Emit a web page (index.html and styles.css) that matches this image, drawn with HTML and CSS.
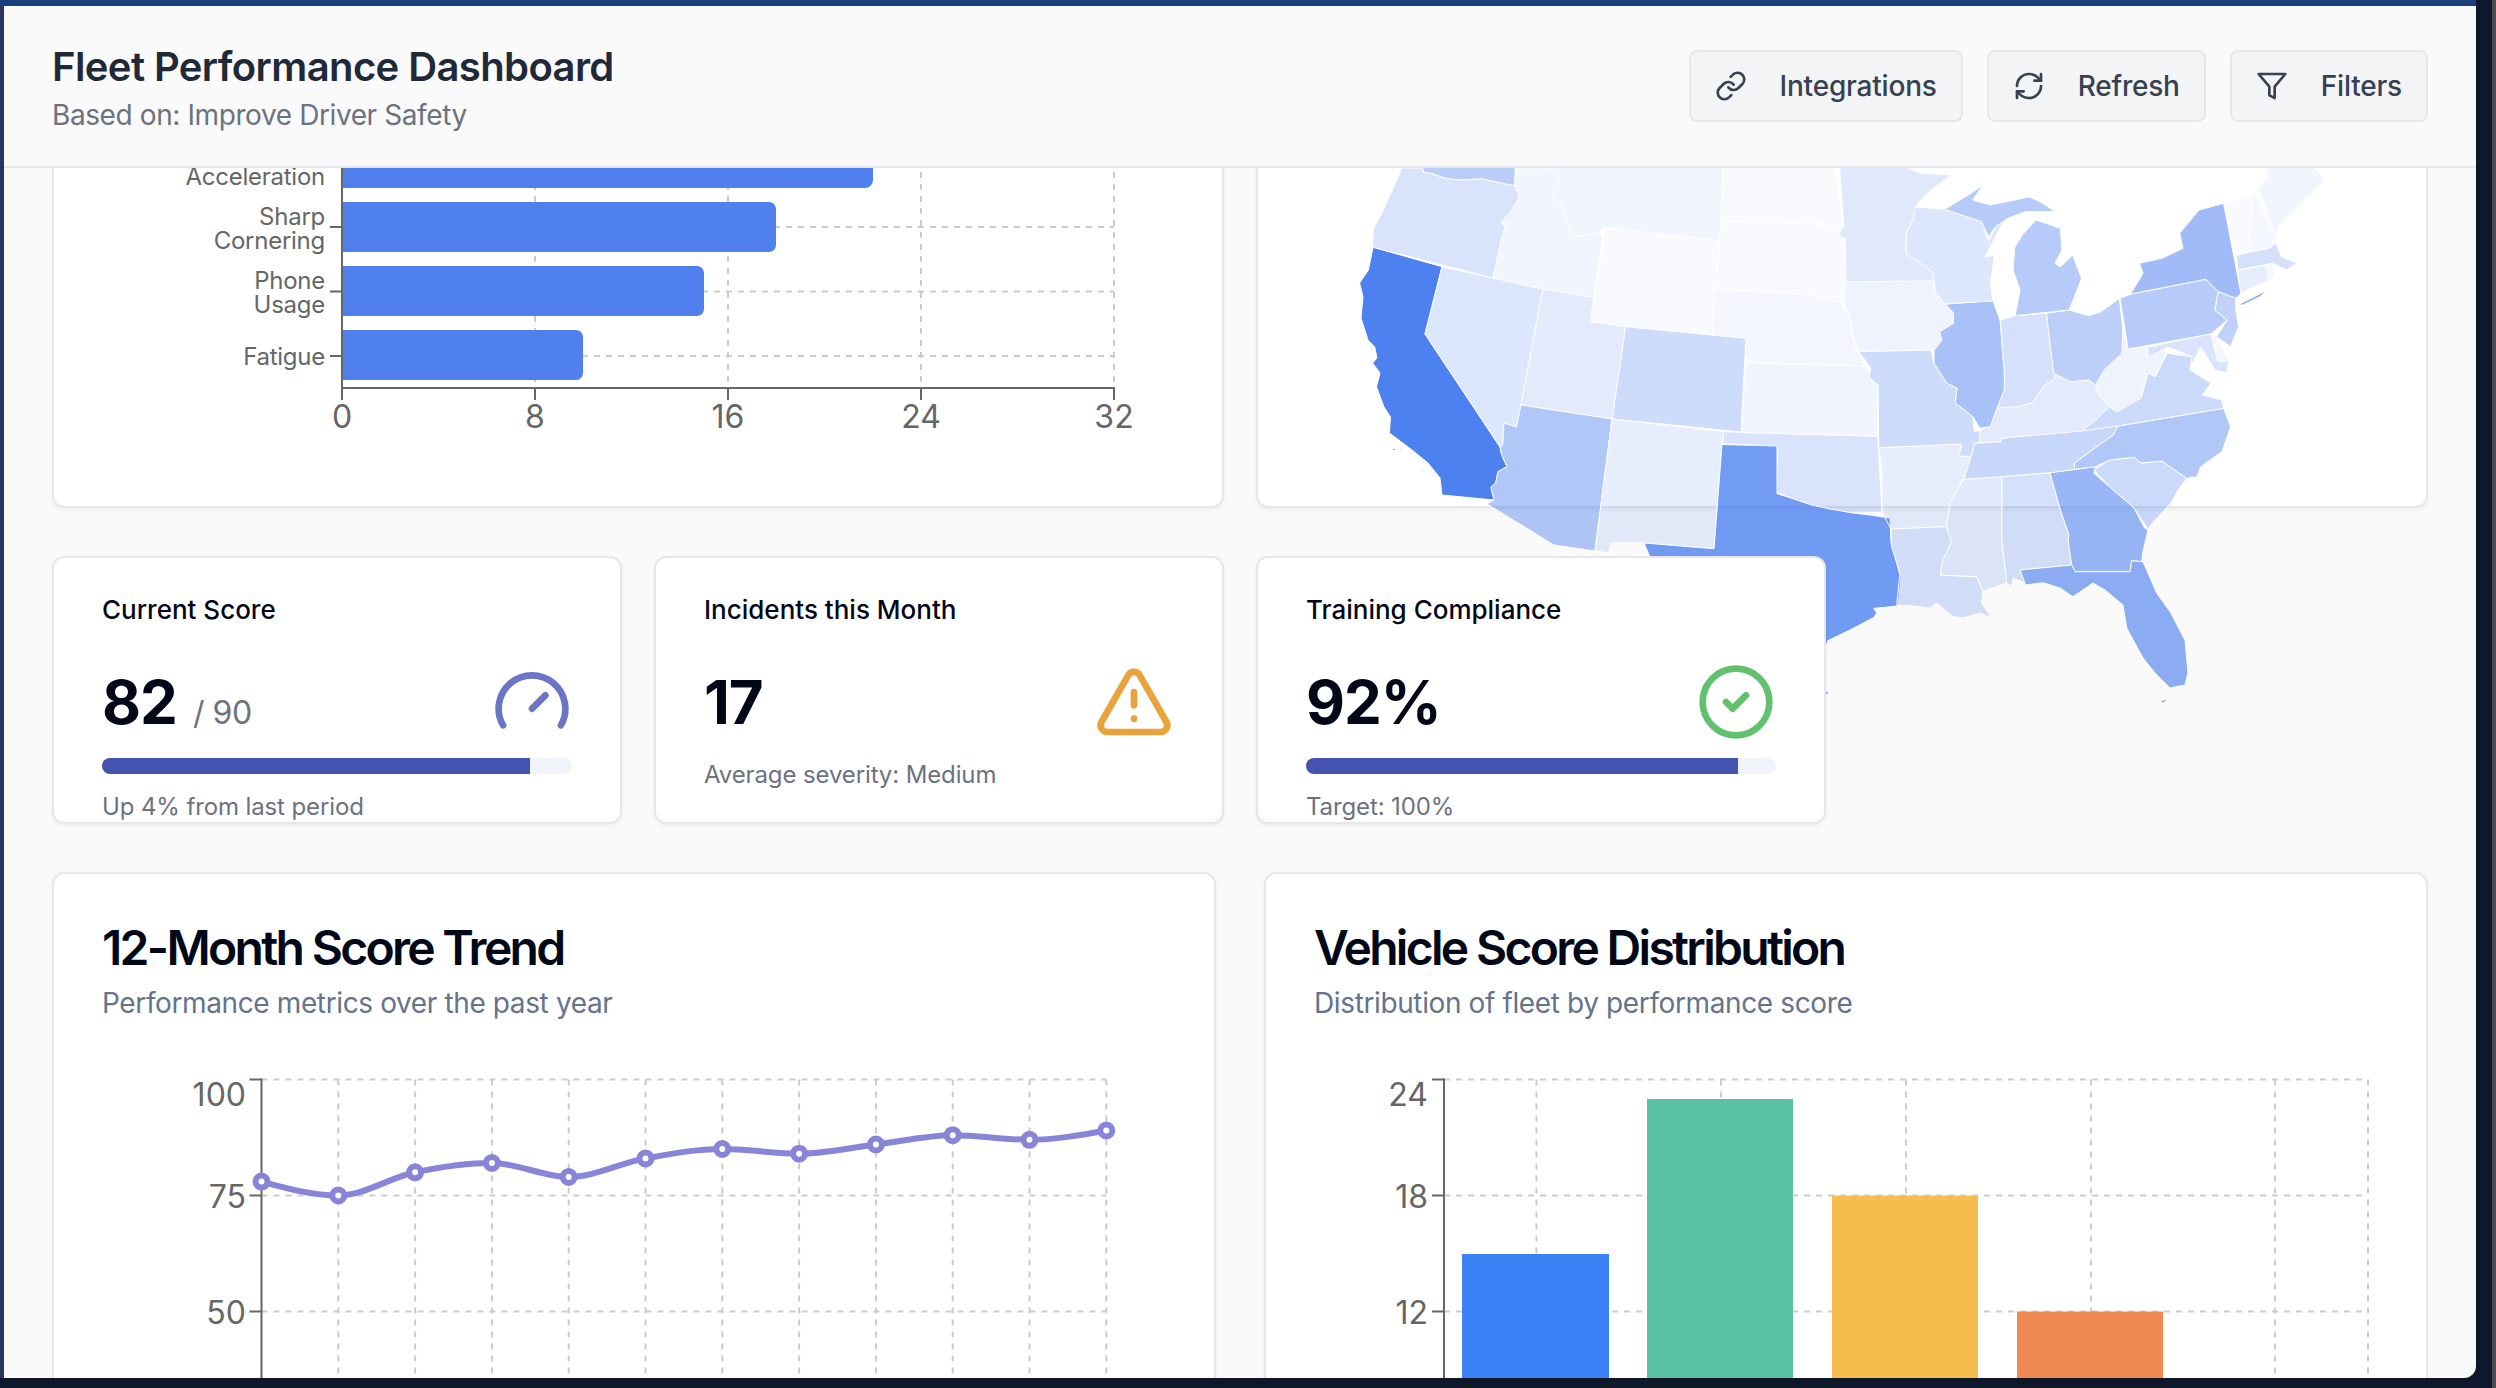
FILE: index.html
```html
<!DOCTYPE html>
<html lang="en">
<head>
<meta charset="utf-8">
<title>Fleet Performance Dashboard</title>
<link rel="stylesheet" href="styles.css">
</head>
<body>
<div class="screen">
  <div class="topbar"></div>
  <div class="screen-row">
    <div class="leftstrip"></div>
    <div class="app">
      <header class="header">
        <div class="titles">
          <h1 class="page-title">Fleet Performance Dashboard</h1>
          <p class="page-sub">Based on: Improve Driver Safety</p>
        </div>
        <div class="actions">
          <button class="btn"><svg class="btn-icon" viewBox="0 0 24 24"><path d="M10 13a5 5 0 0 0 7.54.54l3-3a5 5 0 0 0-7.07-7.07l-1.72 1.71"/><path d="M14 11a5 5 0 0 0-7.54-.54l-3 3a5 5 0 0 0 7.07 7.07l1.71-1.71"/></svg>Integrations</button>
          <button class="btn"><svg class="btn-icon" viewBox="0 0 24 24"><path d="M3 12a9 9 0 0 1 9-9 9.75 9.75 0 0 1 6.74 2.74L21 8"/><path d="M21 3v5h-5"/><path d="M21 12a9 9 0 0 1-9 9 9.75 9.75 0 0 1-6.74-2.74L3 16"/><path d="M8 16H3v5"/></svg>Refresh</button>
          <button class="btn"><svg class="btn-icon" viewBox="0 0 24 24"><polygon points="22 3 2 3 10 12.46 10 19 14 21 14 12.46 22 3"/></svg>Filters</button>
        </div>
      </header>
      <main class="main">
        <section class="row-top">
          <div class="card card-top">
            <svg class="chart-top" viewBox="54 160 1168 346">
              <g class="grid-line">
                <line x1="535" y1="160" x2="535" y2="388"/><line x1="728" y1="160" x2="728" y2="388"/><line x1="921" y1="160" x2="921" y2="388"/><line x1="1114" y1="160" x2="1114" y2="388"/>
                <line x1="342" y1="227" x2="1114" y2="227"/><line x1="342" y1="291.5" x2="1114" y2="291.5"/><line x1="342" y1="356" x2="1114" y2="356"/>
              </g>
              <g class="bar-blue">
                <path d="M342 130H865a8 8 0 0 1 8 8V180a8 8 0 0 1-8 8H342Z"/>
                <path d="M342 202H769a7 7 0 0 1 7 7V245a7 7 0 0 1-7 7H342Z"/>
                <path d="M342 266H697a7 7 0 0 1 7 7V309a7 7 0 0 1-7 7H342Z"/>
                <path d="M342 330H576a7 7 0 0 1 7 7V373a7 7 0 0 1-7 7H342Z"/>
              </g>
              <g class="axis">
                <line x1="342" y1="160" x2="342" y2="389"/><line x1="341" y1="388" x2="1115" y2="388"/>
                <line x1="330" y1="227" x2="342" y2="227"/><line x1="330" y1="291.5" x2="342" y2="291.5"/><line x1="330" y1="356" x2="342" y2="356"/>
                <line x1="342" y1="388" x2="342" y2="400"/><line x1="535" y1="388" x2="535" y2="400"/><line x1="728" y1="388" x2="728" y2="400"/><line x1="921" y1="388" x2="921" y2="400"/><line x1="1114" y1="388" x2="1114" y2="400"/>
              </g>
              <g class="cat-label">
                <text x="325" y="185">Acceleration</text>
                <text x="325" y="225">Sharp</text><text x="325" y="249">Cornering</text>
                <text x="325" y="289">Phone</text><text x="325" y="313">Usage</text>
                <text x="325" y="365">Fatigue</text>
              </g>
              <g class="tick-label tick-mid">
                <text x="342" y="428">0</text><text x="535" y="428">8</text><text x="728" y="428">16</text><text x="921" y="428">24</text><text x="1114" y="428">32</text>
              </g>
            </svg>
          </div>
          <div class="card card-top map-card">
            <svg class="map" viewBox="1256 158 1176 600">
              <g class="states">
                <polygon fill-opacity=".33" points="1421,100 1517.5,100 1514.7,186 1482,179 1458,180 1444,178 1433,174 1423,172"/>
                <polygon fill-opacity=".18" points="1402,168 1421,168 1423,172 1433,174 1444,178 1458,180 1482,179 1514.7,186 1520,197 1510.5,212 1501.7,222 1505,228 1501.7,238 1493,278 1372,247 1373.7,228 1382,213 1391,193"/>
                <polygon fill-opacity=".85" points="1373,247.3 1442,266.7 1425,334 1500,447 1501.7,455 1507,466.7 1498,471.7 1495.7,483 1491,487 1494,500 1442,495 1440,478 1428,463 1412,450 1389.4,433 1390.5,417 1384,407 1376.5,387 1380,373 1372.6,363 1377,358 1374.7,347 1368,340 1361,318 1363,297 1359.6,283 1368.4,270"/>
                <polygon fill-opacity=".85" points="1392,448 1396,449 1394,451"/>
                <polygon fill-opacity=".85" points="1399,449 1404,450 1400,451"/>
                <polygon fill-opacity=".85" points="1421,470 1424,471 1422,472"/>
                <polygon fill-opacity=".17" points="1442,266.7 1543,289 1521,405 1516.4,427 1504,423 1502.7,445 1500,447 1425,334"/>
                <polygon fill-opacity=".07" points="1516.8,168 1548,168 1559.5,181.7 1552.5,198 1561,205 1566.6,221.7 1573.6,236.7 1598,233 1603,238 1593.6,297.7 1543,289 1493,278 1501.7,238 1505,228 1501.7,222 1510.5,212 1520,197 1514.7,186"/>
                <polygon fill-opacity=".07" points="1548,100 1726,100 1720,241 1605,227.7 1598,233 1573.6,236.7 1566.6,221.7 1561,205 1552.5,198 1559.5,181.7 1548,168"/>
                <polygon fill-opacity=".03" points="1605,227.7 1720,241 1713,335 1625.5,326.7 1590.4,321.7"/>
                <polygon fill-opacity=".03" points="1726,100 1835,100 1835,168 1843.7,225 1721,220"/>
                <polygon fill-opacity=".03" points="1721,220 1843.7,225 1838,236 1845.4,238 1846,281.7 1843.7,301.7 1819,299 1808.6,294 1715.6,289.3"/>
                <polygon fill-opacity=".06" points="1715.6,289.3 1808.6,294 1819,299 1840,301.7 1849,316.7 1852,335 1857,351 1865,366 1745.5,362 1746,338.3 1713,335"/>
                <polygon fill-opacity=".24" points="1625.5,326.7 1746,338.3 1741,432 1612,419"/>
                <polygon fill-opacity=".14" points="1543,289 1593.6,297.7 1590.4,321.7 1625.5,326.7 1612,419 1521,405"/>
                <polygon fill-opacity=".38" points="1521,405 1612,419 1595,551 1554,545 1487,504 1494,500 1491,487 1495.7,483 1498,471.7 1507,466.7 1501.7,455 1500,447 1502.7,445 1504,423 1516.4,427"/>
                <polygon fill-opacity=".12" points="1612,419 1723.7,431.7 1722,444.5 1714,548.7 1644,543 1611,543 1609,553 1595,551"/>
                <polygon fill-opacity=".18" points="1723.7,431.7 1877.7,436.3 1882,512 1853,513 1815.6,508 1791,498 1776,491.7 1778,446.7 1722.7,443.3"/>
                <polygon fill-opacity=".07" points="1745.5,362.8 1865,366 1870,373 1877.7,385.7 1877.7,436 1741.4,432.6"/>
                <polygon fill-opacity=".68" points="1722,444.5 1777,446 1777,493.6 1791,498 1811.6,505 1830,509 1853,513 1870,515 1890,518 1891,542 1901,578.6 1898,606 1873.6,608.4 1877,613 1873.6,617.6 1850,630 1828,640.6 1824,652 1824,720 1650,720 1650.4,558 1644,543 1714,548.7"/>
                <polygon fill-opacity=".68" points="1825,690 1829,693 1826,695"/>
                <polygon fill-opacity=".12" points="1878.8,447.7 1962,444 1958.7,456 1971,456.7 1964,478 1950,503 1946.5,526.7 1891,529 1882,512 1882,471.7"/>
                <polygon fill-opacity=".2" points="1891,529 1946.5,526.7 1951.7,541.7 1943,560 1940,575 1976.7,576.7 1983,591.7 1981.7,603 1991.7,618 1980,613 1963,618 1953,616.7 1936.7,603 1930,608 1913,606 1896.7,605 1900,573 1891.7,547"/>
                <polygon fill-opacity=".15" points="1964,479.3 2002,476.7 2001.7,540 2006.7,583 1986.7,590 1983,591.7 1976.7,576.7 1940,575 1943,560 1951.7,541.7 1946.5,526.7 1950,503"/>
                <polygon fill-opacity=".2" points="2002,476.7 2050,472.7 2060.4,510 2069,535 2068,540 2071.7,565 2020,570 2025.7,583 2013,578 2011.7,586.7 2006.7,583 2001.7,540"/>
                <polygon fill-opacity=".49" points="2050,472.7 2095.5,466.7 2093.8,473.3 2111,488 2134,508 2144.6,528 2148,530 2143,551.7 2141.7,561.7 2131.7,560.7 2130,571.7 2075,571.7 2071.7,565 2068,540 2069,535 2060.4,510"/>
                <polygon fill-opacity=".55" points="2020,570 2071.7,565 2075,571.7 2130,571.7 2131.7,560.7 2143,561.7 2156.7,593 2170,611.7 2185,640 2188,673 2185,685 2170,688 2155,673 2143,658 2126.7,628 2123,605 2105,590 2093,583 2073,596.7 2060,588 2043,582.7 2025.7,585"/>
                <polygon fill-opacity=".55" points="2159,702 2168,698 2164,703"/>
                <polygon fill-opacity=".25" points="2093.8,470 2109.6,460 2134,457.3 2141,463 2162,461 2186.7,478.3 2178,490 2171,503 2155,520 2148,529 2134,508 2111,488"/>
                <polygon fill-opacity=".38" points="2118,426 2223.6,408.3 2230.6,426.7 2225,443 2221.8,451.7 2200.7,466.7 2197,476.7 2186.7,478.3 2162,461 2141,463 2134,457.3 2109.6,460 2095.5,466.7 2074.5,469.3 2074.5,463 2092,450 2113,435"/>
                <polygon fill-opacity=".27" points="1974.5,443.3 2000.8,441.7 2000.8,438.3 2118,426 2113,435 2092,450 2074.5,463 2074.5,469.3 2050,472.7 2002,476.7 1964,479.3 1971,456.7"/>
                <polygon fill-opacity=".14" points="1979.8,430 1990.3,426.7 1997,408 2018,406.7 2032,403 2044.7,385 2053.4,380 2055,373.3 2071,381.7 2088.5,380 2095.5,385 2100.8,398 2109.6,406.7 2095.5,420 2081.5,431 2000.8,438.3 2000.8,441.7 1979.8,442.7"/>
                <polygon fill-opacity=".25" points="2081.5,431 2095.5,420 2109.6,406.7 2116.6,411.7 2141,398 2148,373 2155,376.7 2167.4,353 2178,355 2192,356.7 2190,370 2211,383 2202.5,395 2221.8,400 2223.6,408.3 2118,426"/>
                <polygon fill-opacity=".08" points="2095.5,385 2104.3,370 2121.8,353.3 2121.8,330 2128.8,348.3 2146.4,345 2148,357 2158.7,347 2167.4,351.7 2155,376.7 2148,373 2141,398 2116.6,411.7 2109.6,406.7 2100.8,398"/>
                <polygon fill-opacity=".32" points="2046.4,313.3 2069.2,310 2088.5,315.7 2100.8,311.7 2119.4,298.3 2122.9,330 2121.8,353.3 2104.3,370 2095.5,385 2088.5,380 2071,381.7 2053.4,373.3"/>
                <polygon fill-opacity=".2" points="2000,320 2015,315.7 2046.4,313.3 2053.4,373.3 2055,373.3 2053.4,380 2044.7,385 2032,403 2018,406.7 1997,408 2004.3,390 2004.3,373.3"/>
                <polygon fill-opacity=".42" points="1945.4,304 1993,300.7 2000,320 2004.3,373.3 2004.3,390 1997,408 1990.3,426.7 1979.8,428.3 1972.8,416.7 1955.2,403 1957,388.3 1946.5,383 1934,363 1934,350 1942,340 1939.4,331.7 1953.5,323.3 1953.5,313.3"/>
                <polygon fill-opacity=".17" points="1913,206.7 1934,208.3 1944.7,209.3 1981.5,221.7 1988.5,241 1995.6,226.7 2004.3,220 1985,257 1994.5,255 1990.3,283.3 1993,300.7 1945.4,304 1936,293.3 1932.4,271.7 1906,253.3 1906,233 1913,220"/>
                <polygon fill-opacity=".35" points="1944.7,209.3 1971,193.3 1983.3,185 1972.8,200 1990.3,205 2014.9,200 2028.9,196.7 2043,203.3 2055,211.7 2025.4,211.7 2007.8,218.3 1995.6,226.7 1988.5,236.7 1981.5,221.7"/>
                <polygon fill-opacity=".35" points="2036,220 2060.4,228.3 2062,250 2055,263.3 2060.4,266.7 2072.7,255 2081.5,278.3 2074.5,296.7 2069.2,310 2015,315.7 2020,290 2013,270 2014.9,246.7 2023.6,233.3"/>
                <polygon fill-opacity=".15" points="1835,100 1908,100 1908,168 1920,173 1951.7,175 1930.7,190 1915,206.7 1913,220 1906,233 1906,253.3 1932.4,271.7 1934,281 1850,282.3 1846,281.7 1845.4,238 1838,236 1843.7,225"/>
                <polygon fill-opacity=".08" points="1846,281.7 1934,281 1936,293.3 1945.4,304 1953.5,313.3 1953.5,323.3 1939.4,331.7 1942,340 1934,350 1858.8,351.7 1855,343 1850,318 1843.7,301.7"/>
                <polygon fill-opacity=".24" points="1858.8,351.7 1930.7,350 1934,363 1946.5,383 1957,388.3 1955.2,403 1972.8,416.7 1974.5,431.7 1979.8,430 1979.8,442.7 1974.5,443.3 1971,456.7 1958.7,456 1962,444 1878.8,447.7 1878,385 1869.3,376.7 1871,368.3"/>
                <polygon fill-opacity=".35" points="2131.3,294 2206,279.3 2218.3,291.7 2214.8,310 2227,320 2211,334 2128,349 2120,298.3"/>
                <polygon fill-opacity=".46" points="2130.6,294 2143,273.3 2139.4,263.3 2162,258.3 2183,248.3 2179.7,233.3 2199,210 2223.6,203.3 2241,293.3 2235.8,298.3 2218.3,291.7 2206,279.3"/>
                <polygon fill-opacity=".55" points="2237.6,305 2267.4,290 2260,296.7 2243,305"/>
                <polygon fill-opacity=".3" points="2218.3,291.7 2235.8,298.3 2235.8,310 2238.6,326.7 2230.6,346.7 2216.5,336.7 2227,320 2214.8,310"/>
                <polygon fill-opacity=".05" points="2211,334 2216.5,336.7 2228.8,360 2217.6,361.7"/>
                <polygon fill-opacity=".18" points="2147.4,347 2211,334 2217.6,361.7 2228.8,360.7 2227,373 2214.8,370 2200.7,347 2190.2,368 2192,356.7 2167.4,347 2148,357"/>
                <polygon fill-opacity=".03" points="2223.6,203.3 2253.4,196 2248,251.7 2235.8,254"/>
                <polygon fill-opacity=".05" points="2253,188 2276,238 2269,248.3 2248,251.7 2253.4,196"/>
                <polygon fill-opacity=".07" points="2267.4,100 2315,100 2315,168 2325,180 2299,205 2279.7,225 2276,238 2258.6,188 2267.4,178"/>
                <polygon fill-opacity=".2" points="2236.5,255 2269,248.3 2276,242.7 2281.4,256.7 2297,263.3 2286.7,270 2272.7,263.3 2237.6,270"/>
                <polygon fill-opacity=".12" points="2237.6,270.7 2265.6,265 2269,280 2241,293.3"/>
                <polygon fill-opacity=".05" points="2265.6,265 2272.7,263.3 2275,276.7 2269,280"/>
              </g>
            </svg>
          </div>
        </section>

        <section class="row-kpi">
          <div class="card kpi">
            <div class="kpi-label">Current Score</div>
            <div class="kpi-row">
              <div class="kpi-value">82 <span class="kpi-of">/ 90</span></div>
              <svg class="kpi-icon icon-gauge" viewBox="0 0 24 24"><path d="m12 14 4-4"/><path d="M3.34 19a10 10 0 1 1 17.32 0"/></svg>
            </div>
            <div class="progress"><div class="progress-fill fill-score"></div></div>
            <div class="kpi-note">Up 4% from last period</div>
          </div>
          <div class="card kpi">
            <div class="kpi-label">Incidents this Month</div>
            <div class="kpi-row">
              <div class="kpi-value">17</div>
              <svg class="kpi-icon icon-warn" viewBox="0 0 24 24"><path d="m21.73 18-8-14a2 2 0 0 0-3.48 0l-8 14A2 2 0 0 0 4 21h16a2 2 0 0 0 1.73-3"/><path d="M12 9v4"/><path d="M12 17h.01"/></svg>
            </div>
            <div class="kpi-note">Average severity: Medium</div>
          </div>
          <div class="card kpi kpi-over">
            <div class="kpi-label">Training Compliance</div>
            <div class="kpi-row">
              <div class="kpi-value">92%</div>
              <svg class="kpi-icon icon-check" viewBox="0 0 24 24"><circle cx="12" cy="12" r="10"/><path d="m9 12 2 2 4-4"/></svg>
            </div>
            <div class="progress"><div class="progress-fill fill-train"></div></div>
            <div class="kpi-note">Target: 100%</div>
          </div>
        </section>

        <section class="row-charts">
          <div class="card chart-card">
            <h2 class="chart-title">12-Month Score Trend</h2>
            <p class="chart-sub">Performance metrics over the past year</p>
            <svg class="chart" viewBox="102 1060 1064 400">
              <g class="grid-line">
                <line x1="261.5" y1="1079.5" x2="1106.3" y2="1079.5"/><line x1="261.5" y1="1195.5" x2="1106.3" y2="1195.5"/><line x1="261.5" y1="1311.5" x2="1106.3" y2="1311.5"/>
                <line x1="338.3" y1="1079.5" x2="338.3" y2="1460"/><line x1="415.1" y1="1079.5" x2="415.1" y2="1460"/><line x1="491.9" y1="1079.5" x2="491.9" y2="1460"/><line x1="568.7" y1="1079.5" x2="568.7" y2="1460"/><line x1="645.5" y1="1079.5" x2="645.5" y2="1460"/><line x1="722.3" y1="1079.5" x2="722.3" y2="1460"/><line x1="799.1" y1="1079.5" x2="799.1" y2="1460"/><line x1="875.9" y1="1079.5" x2="875.9" y2="1460"/><line x1="952.7" y1="1079.5" x2="952.7" y2="1460"/><line x1="1029.5" y1="1079.5" x2="1029.5" y2="1460"/><line x1="1106.3" y1="1079.5" x2="1106.3" y2="1460"/>
              </g>
              <g class="axis">
                <line x1="261.5" y1="1078.5" x2="261.5" y2="1460"/>
                <line x1="249.5" y1="1079.5" x2="261.5" y2="1079.5"/><line x1="249.5" y1="1195.5" x2="261.5" y2="1195.5"/><line x1="249.5" y1="1311.5" x2="261.5" y2="1311.5"/>
              </g>
              <g class="tick-label tick-end">
                <text x="246" y="1105.5">100</text><text x="246" y="1208">75</text><text x="246" y="1324">50</text>
              </g>
              <path class="trend" d="M261.5 1181.6C287.1 1188.55 312.7 1195.5 338.3 1195.5C363.9 1195.5 389.5 1177.7 415.1 1172.3C440.7 1166.9 466.3 1163 491.9 1163C517.5 1163 543.1 1177 568.7 1177C594.3 1177 619.9 1163.07 645.5 1158.4C671.1 1153.73 696.7 1149 722.3 1149C747.9 1149 773.5 1153.7 799.1 1153.7C824.7 1153.7 850.3 1147.6 875.9 1144.5C901.5 1141.4 927.1 1135.2 952.7 1135.2C978.3 1135.2 1003.9 1139.8 1029.5 1139.8C1055.1 1139.8 1080.7 1135.15 1106.3 1130.5"/>
              <g class="dot">
                <circle cx="261.5" cy="1181.6" r="6"/><circle cx="338.3" cy="1195.5" r="6"/><circle cx="415.1" cy="1172.3" r="6"/><circle cx="491.9" cy="1163" r="6"/><circle cx="568.7" cy="1177" r="6"/><circle cx="645.5" cy="1158.4" r="6"/><circle cx="722.3" cy="1149" r="6"/><circle cx="799.1" cy="1153.7" r="6"/><circle cx="875.9" cy="1144.5" r="6"/><circle cx="952.7" cy="1135.2" r="6"/><circle cx="1029.5" cy="1139.8" r="6"/><circle cx="1106.3" cy="1130.5" r="6"/>
              </g>
            </svg>
          </div>
          <div class="card chart-card">
            <h2 class="chart-title">Vehicle Score Distribution</h2>
            <p class="chart-sub">Distribution of fleet by performance score</p>
            <svg class="chart" viewBox="1314 1060 1064 400">
              <g class="grid-line">
                <line x1="1444" y1="1079.5" x2="2368" y2="1079.5"/><line x1="1444" y1="1195.5" x2="2368" y2="1195.5"/><line x1="1444" y1="1311.5" x2="2368" y2="1311.5"/>
                <line x1="1536.5" y1="1079.5" x2="1536.5" y2="1460"/><line x1="1721" y1="1079.5" x2="1721" y2="1460"/><line x1="1906" y1="1079.5" x2="1906" y2="1460"/><line x1="2091" y1="1079.5" x2="2091" y2="1460"/><line x1="2275" y1="1079.5" x2="2275" y2="1460"/><line x1="2368" y1="1079.5" x2="2368" y2="1460"/>
              </g>
              <rect class="bar-1" x="1462" y="1254" width="147" height="206"/>
              <rect class="bar-2" x="1647" y="1099" width="146" height="361"/>
              <rect class="bar-3" x="1832" y="1195.5" width="146" height="265"/>
              <rect class="bar-4" x="2017" y="1311.5" width="146" height="149"/>
              <g class="axis">
                <line x1="1444" y1="1078.5" x2="1444" y2="1460"/>
                <line x1="1432" y1="1079.5" x2="1444" y2="1079.5"/><line x1="1432" y1="1195.5" x2="1444" y2="1195.5"/><line x1="1432" y1="1311.5" x2="1444" y2="1311.5"/>
              </g>
              <g class="tick-label tick-end">
                <text x="1428" y="1105.5">24</text><text x="1428" y="1208">18</text><text x="1428" y="1324">12</text>
              </g>
            </svg>
          </div>
        </section>
      </main>
    </div>
  </div>
</div>
<div class="edge"></div>
</body>
</html>
```
FILE: styles.css
```css
* { box-sizing: border-box; }
html, body { margin: 0; padding: 0; }
body {
  width: 2496px;
  height: 1388px;
  overflow: hidden;
  display: flex;
  background: #0f172a;
  font-family: Inter, "Noto Sans", sans-serif;
}
.screen {
  width: 2476px;
  height: 1378px;
  display: flex;
  flex-direction: column;
}
.edge { width: 4px; margin-left: 16px; background: #4a4a4e; }
.topbar { height: 6px; background: #1a3f7c; flex: none; }
.screen-row { flex: 1; display: flex; min-height: 0; }
.leftstrip { width: 4px; background: #2d3561; flex: none; }
.app {
  flex: 1;
  min-width: 0;
  display: flex;
  flex-direction: column;
  background: #fafafa;
  border-bottom-right-radius: 12px;
  overflow: hidden;
}
.header {
  height: 162px;
  flex: none;
  display: flex;
  align-items: center;
  justify-content: space-between;
  padding: 0 48px;
  border-bottom: 2px solid #e5e7eb;
  position: relative;
  z-index: 5;
  background: #fafafa;
}
.titles { margin-top: 6px; }
.page-title {
  margin: 0;
  font-size: 40px;
  line-height: 48px;
  font-weight: 600;
  letter-spacing: -0.6px;
  color: #1f2937;
}
.page-sub {
  margin: 4px 0 0;
  font-size: 28px;
  line-height: 40px;
  letter-spacing: -0.4px;
  color: #6b7280;
}
.actions { display: flex; gap: 24px; }
.btn {
  height: 72px;
  display: flex;
  align-items: center;
  gap: 33px;
  padding: 0 24px;
  border: 2px solid #e5e7eb;
  border-radius: 8px;
  background: #f3f4f6;
  color: #374151;
  font-family: inherit;
  font-size: 28px;
  font-weight: 500;
  letter-spacing: -0.2px;
}
.btn-icon {
  width: 32px;
  height: 32px;
  fill: none;
  stroke: #374151;
  stroke-width: 2;
  stroke-linecap: round;
  stroke-linejoin: round;
}
.main {
  flex: 1;
  min-height: 0;
  padding: 0 48px;
  overflow: hidden;
  position: relative;
}
.card {
  background: #fff;
  border: 2px solid #e5e7eb;
  border-radius: 12px;
  box-shadow: 0 2px 4px rgba(0, 0, 0, 0.05);
}
.row-top {
  display: grid;
  grid-template-columns: 1fr 1fr;
  gap: 32px;
  margin-top: -10px;
}
.card-top { height: 350px; position: relative; }
.chart-top { display: block; width: 1168px; height: 346px; overflow: hidden; }
.map {
  position: absolute;
  left: -2px;
  top: -2px;
  width: 1176px;
  height: 600px;
  overflow: visible;
  z-index: 1;
  pointer-events: none;
}
.states polygon {
  fill: #2f6bed;
  stroke: #fff;
  stroke-width: 1;
  stroke-linejoin: round;
}
.row-kpi {
  display: grid;
  grid-template-columns: repeat(4, 1fr);
  gap: 32px;
  margin-top: 48px;
}
.kpi { height: 268px; padding: 32px 48px 0; }
.kpi-over { position: relative; z-index: 2; }
.kpi-label {
  font-size: 26px;
  line-height: 40px;
  font-weight: 500;
  color: #020817;
}
.kpi-row {
  margin-top: 32px;
  display: flex;
  align-items: center;
  justify-content: space-between;
  height: 80px;
}
.kpi-value {
  font-size: 60px;
  line-height: 80px;
  font-weight: 700;
  letter-spacing: -1px;
  color: #020817;
}
.kpi-of {
  font-size: 32px;
  line-height: 1;
  font-weight: 400;
  letter-spacing: -0.5px;
  margin-left: 3px;
  color: #6b7280;
}
.kpi-icon {
  width: 80px;
  height: 80px;
  fill: none;
  stroke-width: 2;
  stroke-linecap: round;
  stroke-linejoin: round;
}
.icon-gauge { stroke: #6a75c4; }
.icon-warn { stroke: #e9a33d; }
.icon-check { stroke: #61c16f; }
.progress {
  margin-top: 16px;
  height: 16px;
  border-radius: 8px;
  background: #f1f4fa;
  overflow: hidden;
}
.progress-fill { height: 100%; background: #4452b0; }
.fill-score { width: 91.1%; }
.fill-train { width: 92%; }
.kpi-note {
  margin-top: 17px;
  font-size: 24px;
  line-height: 32px;
  letter-spacing: -0.12px;
  color: #6b7280;
}
.row-charts {
  display: grid;
  grid-template-columns: 1fr 1fr;
  gap: 48px;
  margin-top: 48px;
}
.chart-card { height: 700px; padding: 48px; }
.chart-title {
  margin: 0;
  font-size: 48px;
  line-height: 52px;
  font-weight: 600;
  letter-spacing: -2.7px;
  color: #020817;
}
.chart-sub {
  margin: 9px 0 0;
  font-size: 28px;
  line-height: 40px;
  letter-spacing: -0.38px;
  color: #64748b;
}
.chart {
  display: block;
  width: 1064px;
  height: 400px;
  margin-top: 37px;
  overflow: hidden;
}
.grid-line line {
  stroke: #ccc;
  stroke-width: 2;
  stroke-dasharray: 6 6;
}
.axis line { stroke: #666; stroke-width: 2; }
.bar-blue path { fill: #4f80ee; }
.cat-label text {
  font-family: Inter, sans-serif;
  font-size: 24px;
  letter-spacing: -0.25px;
  fill: #666;
  text-anchor: end;
}
.tick-label text {
  font-family: Inter, sans-serif;
  font-size: 32px;
  fill: #666;
}
.tick-mid text { text-anchor: middle; }
.tick-end text { text-anchor: end; }
.trend { fill: none; stroke: #8884d8; stroke-width: 6; }
.dot circle { fill: #fff; stroke: #8884d8; stroke-width: 6; }
.bar-1 { fill: #3b82f6; }
.bar-2 { fill: #5ac1a2; }
.bar-3 { fill: #f5bd4d; }
.bar-4 { fill: #f08a52; }
```
